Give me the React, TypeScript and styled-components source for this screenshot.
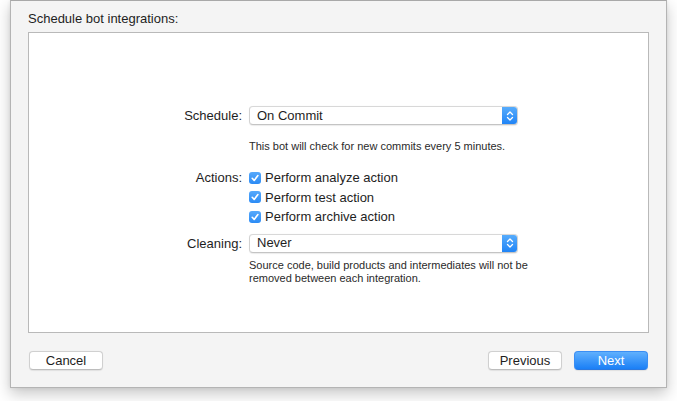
import React from "react";
import styled, { createGlobalStyle } from "styled-components";

const Global = createGlobalStyle`
  html, body { margin: 0; padding: 0; background: #ffffff; }
  body { font-family: "Helvetica Neue", "Liberation Sans", Arial, sans-serif; color: #222; }
  * { box-sizing: border-box; }
`;

const Page = styled.div`
  width: 677px;
  height: 401px;
  padding: 0 10px 0 10px;
  overflow: hidden;
`;

const Window = styled.div`
  width: 657px;
  height: 388px;
  background: #f4f4f4;
  border: 1px solid #b4b4b4;
  border-top-color: #a8a8a8;
  box-shadow: 0 6px 14px rgba(0, 0, 0, 0.22), 0 0 4px rgba(0, 0, 0, 0.08);
  display: flex;
  flex-direction: column;
  padding: 10px 18px 0 17px;
`;

const Title = styled.div`
  font-size: 13px;
  line-height: 16px;
  height: 16px;
  color: #1e1e1e;
  margin-bottom: 5px;
`;

const Panel = styled.div`
  width: 621px;
  height: 301px;
  background: #ffffff;
  border: 1px solid #b9b9b9;
  padding-top: 73px;
`;

const Form = styled.div`
  display: grid;
  grid-template-columns: 213px 269px;
  column-gap: 7px;
  align-items: center;
`;

const Label = styled.div<{ $top?: number }>`
  font-size: 13px;
  line-height: 16px;
  text-align: right;
  color: #1e1e1e;
  align-self: start;
  padding-top: ${(p) => p.$top ?? 0}px;
`;

const Cell = styled.div``;

const Select = styled.div<{ $mt?: number }>`
  height: 19px;
  width: 269px;
  margin-top: ${(p) => p.$mt ?? 0}px;
  display: flex;
  align-items: center;
  background: #ffffff;
  border: 1px solid #d2d2d2;
  border-top-color: #d8d8d8;
  border-bottom-color: #c4c4c4;
  border-radius: 4px;
  box-shadow: 0 0.5px 1px rgba(0, 0, 0, 0.08);
  font-size: 13px;
  color: #1e1e1e;
  padding-left: 7px;
  overflow: hidden;
`;

const SelectText = styled.span`
  flex: 1;
  line-height: 16px;
`;

const Stepper = styled.div`
  width: 16px;
  height: 19px;
  margin: -1px -1px -1px 0;
  border-radius: 0 4px 4px 0;
  background: linear-gradient(#5aaefc, #1d82f6);
  display: flex;
  align-items: center;
  justify-content: center;
`;

const Hint = styled.div<{ $mt: number; $mb: number }>`
  width: 280px;
  font-size: 11px;
  line-height: 13px;
  color: #2a2a2a;
  margin-top: ${(p) => p.$mt}px;
  margin-bottom: ${(p) => p.$mb}px;
`;

const CheckList = styled.div`
  display: flex;
  flex-direction: column;
`;

const CheckRow = styled.div`
  display: flex;
  align-items: center;
  height: 19.5px;
  font-size: 13px;
  color: #1e1e1e;
  gap: 4px;
`;

const Box = styled.span`
  width: 12px;
  height: 12px;
  border-radius: 3px;
  background: linear-gradient(#57a9fb, #2b8bf5);
  display: inline-flex;
  align-items: center;
  justify-content: center;
  flex: none;
`;

const Footer = styled.div`
  display: flex;
  align-items: center;
  padding-top: 18px;
  padding-left: 1px;
`;

const Spacer = styled.div`
  flex: 1;
`;

const Button = styled.button<{ $primary?: boolean }>`
  width: 74px;
  height: 19px;
  margin-left: ${(p) => (p.$primary ? "12px" : "0")};
  border-radius: 4px;
  font-family: inherit;
  font-size: 13px;
  line-height: 16px;
  padding: 0;
  cursor: default;
  color: ${(p) => (p.$primary ? "#ffffff" : "#1e1e1e")};
  background: ${(p) =>
    p.$primary ? "linear-gradient(#60b0fd, #1a7ff6)" : "#ffffff"};
  border: 1px solid ${(p) => (p.$primary ? "#3a8ef4" : "#d0d0d0")};
  border-bottom-color: ${(p) => (p.$primary ? "#2a78e0" : "#bdbdbd")};
  box-shadow: 0 0.5px 1px rgba(0, 0, 0, 0.08);
`;

const Chevrons = () => (
  <svg width="8" height="12" viewBox="0 0 8 12">
    <path d="M1.5 4.5 L4 2 L6.5 4.5" fill="none" stroke="#fff" strokeWidth="1.3" strokeLinecap="round" strokeLinejoin="round" />
    <path d="M1.5 7.5 L4 10 L6.5 7.5" fill="none" stroke="#fff" strokeWidth="1.3" strokeLinecap="round" strokeLinejoin="round" />
  </svg>
);

const Check = () => (
  <svg width="10" height="10" viewBox="0 0 10 10">
    <path d="M2.2 5.3 L4.2 7.4 L7.9 2.6" fill="none" stroke="#fff" strokeWidth="1.6" strokeLinecap="round" strokeLinejoin="round" />
  </svg>
);

const actions = ["Perform analyze action", "Perform test action", "Perform archive action"];

export default function App() {
  return (
    <>
      <Global />
      <Page>
        <Window>
          <Title>Schedule bot integrations:</Title>
          <Panel>
            <Form>
              <Label $top={2}>Schedule:</Label>
              <Cell>
                <Select>
                  <SelectText>On Commit</SelectText>
                  <Stepper>
                    <Chevrons />
                  </Stepper>
                </Select>
                <Hint $mt={15} $mb={15}>This bot will check for new commits every 5 minutes.</Hint>
              </Cell>
              <Label $top={2}>Actions:</Label>
              <Cell>
                <CheckList>
                  {actions.map((a) => (
                    <CheckRow key={a}>
                      <Box>
                        <Check />
                      </Box>
                      {a}
                    </CheckRow>
                  ))}
                </CheckList>
              </Cell>
              <Label $top={9}>Cleaning:</Label>
              <Cell>
                <Select $mt={7}>
                  <SelectText>Never</SelectText>
                  <Stepper>
                    <Chevrons />
                  </Stepper>
                </Select>
                <Hint $mt={6} $mb={0}>
                  Source code, build products and intermediates will not be removed between each integration.
                </Hint>
              </Cell>
            </Form>
          </Panel>
          <Footer>
            <Button>Cancel</Button>
            <Spacer />
            <Button>Previous</Button>
            <Button $primary>Next</Button>
          </Footer>
        </Window>
      </Page>
    </>
  );
}
